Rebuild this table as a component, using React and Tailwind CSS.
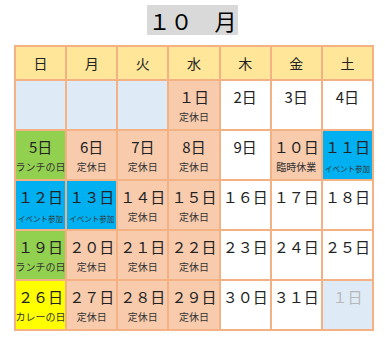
import React from "react";

const HEADERS = ["日", "月", "火", "水", "木", "金", "土"];

const BG = {
  blank: "bg-[#deebf7]",
  off: "bg-[#f8cbad]",
  white: "bg-white",
  green: "bg-[#92d050]",
  blue: "bg-[#00b0f0]",
  yellow: "bg-[#ffff00]",
};

// 10月のカレンダー
const CELLS = [
  { t: "blank" }, { t: "blank" }, { t: "blank" },
  { d: "１日", t: "off", n: "定休日" },
  { d: "2日", t: "white" }, { d: "3日", t: "white" }, { d: "4日", t: "white" },

  { d: "5日", t: "green", n: "ランチの日" },
  { d: "6日", t: "off", n: "定休日" },
  { d: "7日", t: "off", n: "定休日" },
  { d: "8日", t: "off", n: "定休日" },
  { d: "9日", t: "white" },
  { d: "１０日", t: "off", n: "臨時休業" },
  { d: "１１日", t: "blue", n: "イベント参加", small: true },

  { d: "１２日", t: "blue", n: "イベント参加", small: true },
  { d: "１３日", t: "blue", n: "イベント参加", small: true },
  { d: "１４日", t: "off", n: "定休日" },
  { d: "１５日", t: "off", n: "定休日" },
  { d: "１６日", t: "white" },
  { d: "１７日", t: "white" },
  { d: "１８日", t: "white" },

  { d: "１９日", t: "green", n: "ランチの日" },
  { d: "２０日", t: "off", n: "定休日" },
  { d: "２１日", t: "off", n: "定休日" },
  { d: "２２日", t: "off", n: "定休日" },
  { d: "２３日", t: "white" },
  { d: "２４日", t: "white" },
  { d: "２５日", t: "white" },

  { d: "２６日", t: "yellow", n: "カレーの日" },
  { d: "２７日", t: "off", n: "定休日" },
  { d: "２８日", t: "off", n: "定休日" },
  { d: "２９日", t: "off", n: "定休日" },
  { d: "３０日", t: "white" },
  { d: "３１日", t: "white" },
  { d: "１日", t: "blank", muted: true },
];

export default function App() {
  return (
    <div
      className="w-[385px] h-[340px] bg-white"
      style={{ fontFamily: '"Noto Sans CJK JP", "Noto Sans", sans-serif' }}
    >
      <div className="flex justify-center pt-[5px]">
        <div className="w-[91px] h-[30px] bg-[#d9d9d9] flex items-center justify-center text-[22px] leading-none text-black whitespace-nowrap">
          １０　月
        </div>
      </div>
      <div className="mt-[10px] ml-[14px] w-[360px] grid grid-cols-7 grid-rows-[32px_repeat(5,48px)] gap-[2px] p-[2px] bg-[#f4b183]">
        {HEADERS.map((h) => (
          <div
            key={h}
            className="bg-[#ffe699] flex items-center justify-center text-[14px] text-[#222]"
          >
            {h}
          </div>
        ))}
        {CELLS.map((c, i) => (
          <div
            key={i}
            className={`${BG[c.t]} flex flex-col items-center pt-[6px]`}
          >
            {c.d && (
              <div
                className={`text-[15px] leading-[20px] ${
                  c.muted ? "text-[#b8b8b8]" : "text-[#222]"
                }`}
              >
                {c.d}
              </div>
            )}
            {c.n && (
              <div
                className={`${
                  c.small ? "text-[7.5px] mt-[6px]" : "text-[10px] mt-[4px]"
                } leading-[12px] text-[#333] whitespace-nowrap`}
              >
                {c.n}
              </div>
            )}
          </div>
        ))}
      </div>
    </div>
  );
}
